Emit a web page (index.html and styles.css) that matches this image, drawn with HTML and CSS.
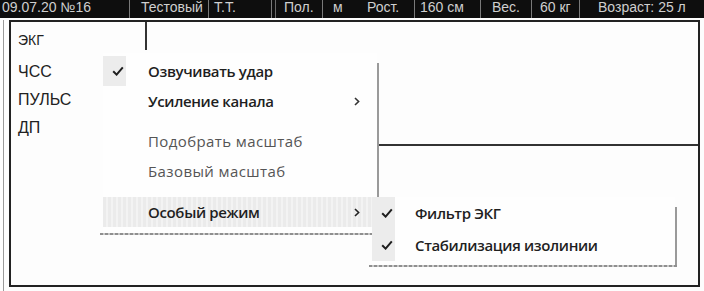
FILE: index.html
```html
<!DOCTYPE html>
<html lang="ru">
<head>
<meta charset="utf-8">
<title>ЭКГ</title>
<link rel="stylesheet" href="styles.css">
</head>
<body>
<div class="screen">
  <header class="bar">
    <span class="cell c-date">09.07.20 №16</span>
    <span class="cell c-name sep">Тестовый</span>
    <span class="cell c-init sep">Т.Т.</span>
    <span class="cell c-sex sep dbl">Пол.</span>
    <span class="cell c-sexv sep">м</span>
    <span class="cell c-h">Рост.</span>
    <span class="cell c-hv sep">160 см</span>
    <span class="cell c-w sep">Вес.</span>
    <span class="cell c-wv sep">60 кг</span>
    <span class="cell c-age sep">Возраст: 25 л</span>
  </header>

  <div class="body">
    <div class="frame">
      <div class="labels">
        <div class="lead">ЭКГ</div>
        <div class="label">ЧСС</div>
        <div class="label">ПУЛЬС</div>
        <div class="label">ДП</div>
      </div>
      <div class="chart">
        <div class="chart-top"></div>
      </div>
    </div>
  </div>

  <div class="menu main-menu">
    <div class="item checked strong">
      <span class="chk"><svg viewBox="0 0 12 10" width="12" height="10"><path d="M1.2 5.2 L4.6 8.6 L10.8 1.4" fill="none" stroke="#1e1e1e" stroke-width="2"/></svg></span>
      <span class="txt">Озвучивать удар</span>
    </div>
    <div class="item strong">
      <span class="chk"></span>
      <span class="txt">Усиление канала</span>
      <span class="arr"><svg viewBox="0 0 6 9" width="6" height="9"><path d="M1 1 L4.6 4.5 L1 8" fill="none" stroke="#333" stroke-width="1.6"/></svg></span>
    </div>
    <div class="gap"></div>
    <div class="item light">
      <span class="chk"></span>
      <span class="txt">Подобрать масштаб</span>
    </div>
    <div class="item light">
      <span class="chk"></span>
      <span class="txt">Базовый масштаб</span>
    </div>
    <div class="gap gap2"></div>
    <div class="item strong hover">
      <span class="chk"></span>
      <span class="txt">Особый режим</span>
      <span class="arr"><svg viewBox="0 0 6 9" width="6" height="9"><path d="M1 1 L4.6 4.5 L1 8" fill="none" stroke="#222" stroke-width="1.6"/></svg></span>
    </div>
  </div>

  <div class="menu sub-menu">
    <div class="item checked strong">
      <span class="chk"><svg viewBox="0 0 12 10" width="12" height="10"><path d="M1.2 5.2 L4.6 8.6 L10.8 1.4" fill="none" stroke="#1e1e1e" stroke-width="2"/></svg></span>
      <span class="txt">Фильтр ЭКГ</span>
    </div>
    <div class="item checked strong">
      <span class="chk"><svg viewBox="0 0 12 10" width="12" height="10"><path d="M1.2 5.2 L4.6 8.6 L10.8 1.4" fill="none" stroke="#1e1e1e" stroke-width="2"/></svg></span>
      <span class="txt">Стабилизация изолинии</span>
    </div>
  </div>
</div>
</body>
</html>
```

FILE: styles.css
```css
* { box-sizing: border-box; }
html, body { margin: 0; padding: 0; background: #fdfdfd; }
.screen {
  position: relative;
  width: 704px;
  height: 291px;
  overflow: hidden;
  background: #fdfdfd;
}

/* top black info bar */
.bar {
  display: grid;
  grid-template-columns: 129px 79px 63px 51px 35px 57px 66px 51px 48px 125px;
  height: 18px;
  background: #0e0e0e;
  overflow: hidden;
  font-family: "Liberation Sans", Arial, sans-serif;
  font-size: 14px;
  line-height: 14px;
  color: #cfcfcf;
  white-space: nowrap;
}
.cell { display: block; padding-left: 8px; overflow: hidden; }
.c-date { padding-left: 2px; }
.c-name { padding-left: 11px; }
.c-init { padding-left: 5px; }
.c-sex { padding-left: 12px; }
.c-sexv { padding-left: 10px; }
.c-h { padding-left: 10px; }
.c-hv { padding-left: 5px; }
.c-w { padding-left: 11px; }
.c-wv { padding-left: 8px; }
.c-age { padding-left: 18px; }
.sep { border-left: 1px solid #7a7a7a; }
.dbl { box-shadow: inset 3px 0 0 #0e0e0e, inset 4px 0 0 #6a6a6a; }

/* main framed area */
.body {
  margin-top: 2px;
  margin-left: 3px;
  height: 271px;
  border-left: 1px solid #9a9a9a;
  padding-left: 5px;
}
.frame {
  display: flex;
  width: 691px;
  height: 267px;
  border: 2px solid #222;
  background: #fdfdfd;
}
.labels {
  width: 366px;
  display: flex;
  flex-direction: column;
  font-family: "Liberation Sans", Arial, sans-serif;
  color: #222;
}
.lead {
  width: 136px;
  height: 28px;
  border-right: 2px solid #333;
  padding: 9px 0 0 7px;
  font-size: 14px;
  line-height: 18px;
  margin-bottom: 8px;
}
.label {
  height: 28px;
  line-height: 28px;
  padding-left: 7px;
  font-size: 16px;
}
.chart { flex: 1; }
.chart-top {
  height: 124px;
  border-bottom: 2px solid #333;
}

/* context menus */
.menu {
  position: absolute;
  background: #fefefe;
  font-family: "Open Sans", "Noto Sans", sans-serif;
  font-size: 15px;
  letter-spacing: -0.35px;
}
.menu::before {
  content: "";
  position: absolute;
  top: 10px;
  bottom: -1px;
  right: -2px;
  width: 2px;
  background: #9a9a9a;
}
.menu::after {
  content: "";
  position: absolute;
  left: -3px;
  right: -2px;
  bottom: -2px;
  height: 2px;
  background: repeating-linear-gradient(90deg, #8f8f8f 0 3px, #c8c8c8 3px 5px);
}
.main-menu {
  left: 103px;
  top: 53px;
  width: 274px;
  height: 180px;
  padding-top: 3px;
}
.sub-menu {
  left: 372px;
  top: 197px;
  width: 303px;
  height: 68px;
  padding-top: 0;
}
.item {
  position: relative;
  display: flex;
  align-items: center;
  height: 30px;
  color: #333;
}
.item .chk {
  width: 23px;
  height: 100%;
  display: flex;
  align-items: center;
  justify-content: center;
  padding-left: 6px;
}
.item.checked .chk { background: #ececec; }
.main-menu .txt { margin-left: 22px; }
.sub-menu .txt { margin-left: 20px; }
.sub-menu .item { height: 32px; }
.strong { font-weight: 600; color: #1f1f1f; }
.light { font-weight: 400; color: #555; letter-spacing: 0.4px; }
.hover { background: repeating-linear-gradient(90deg, #ebebeb 0 3px, #f3f3f3 3px 5px); }
.arr {
  margin-left: auto;
  margin-right: 17px;
  display: flex;
  align-items: center;
}
.gap { height: 10px; }
.gap2 { height: 11px; }
```
